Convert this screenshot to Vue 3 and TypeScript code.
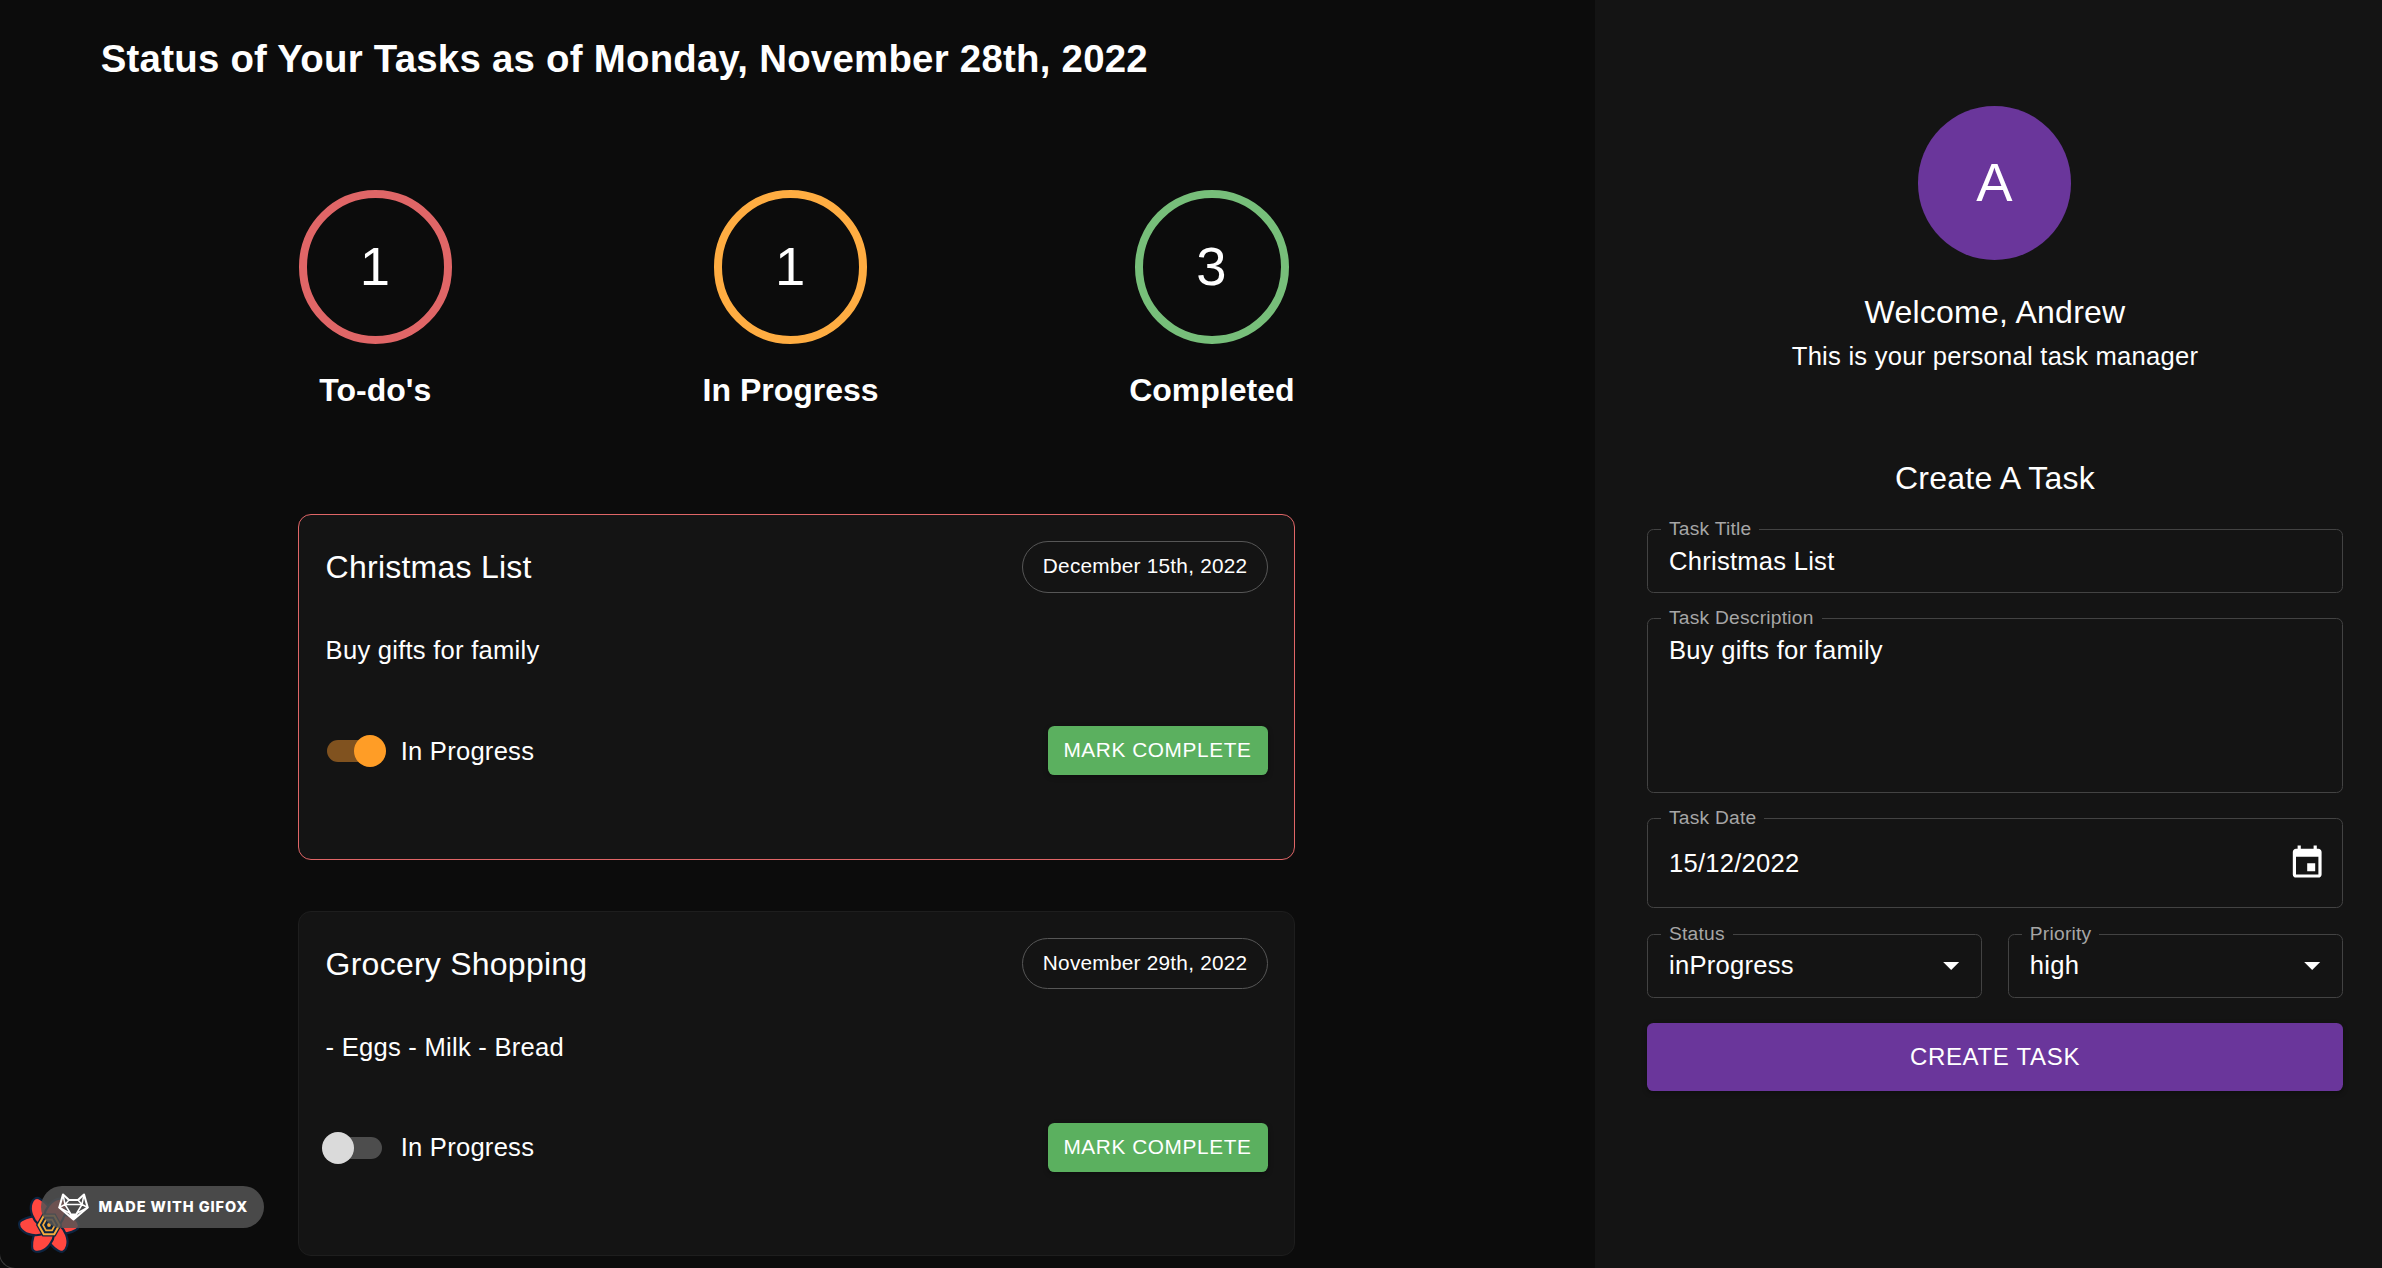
<script setup lang="ts">
interface Stat {
  label: string
  count: number
  color: string
}

interface Task {
  title: string
  date: string
  description: string
  inProgress: boolean
  priority: 'high' | 'normal'
}

const stats: Stat[] = [
  { label: "To-do's", count: 1, color: '#e06667' },
  { label: 'In Progress', count: 1, color: '#ffad42' },
  { label: 'Completed', count: 3, color: '#77bf7a' },
]

const tasks: Task[] = [
  {
    title: 'Christmas List',
    date: 'December 15th, 2022',
    description: 'Buy gifts for family',
    inProgress: true,
    priority: 'high',
  },
  {
    title: 'Grocery Shopping',
    date: 'November 29th, 2022',
    description: '- Eggs - Milk - Bread',
    inProgress: false,
    priority: 'normal',
  },
]

const petals = [2, 62, 120, 182, 243, 302]
</script>

<template>
  <div class="page">
    <main class="board">
      <h1 class="heading">Status of Your Tasks as of Monday, November 28th, 2022</h1>

      <section class="stats">
        <div v-for="s in stats" :key="s.label" class="stat">
          <div class="ring" :style="{ borderColor: s.color }">{{ s.count }}</div>
          <div class="stat-label">{{ s.label }}</div>
        </div>
      </section>

      <section class="tasks">
        <article v-for="t in tasks" :key="t.title" class="card" :class="t.priority">
          <header class="card-head">
            <h2 class="card-title">{{ t.title }}</h2>
            <span class="chip">{{ t.date }}</span>
          </header>
          <p class="card-text">{{ t.description }}</p>
          <footer class="card-foot">
            <span class="switch" :class="{ on: t.inProgress }"><span class="thumb"></span></span>
            <span class="switch-label">In Progress</span>
            <button class="complete" type="button">MARK COMPLETE</button>
          </footer>
        </article>
      </section>
    </main>

    <aside class="sidebar">
      <div class="avatar">A</div>
      <div class="welcome">Welcome, Andrew</div>
      <div class="subtitle">This is your personal task manager</div>

      <h2 class="form-title">Create A Task</h2>
      <form class="form">
        <div class="field">
          <span class="legend">Task Title</span>
          <span class="value">Christmas List</span>
        </div>
        <div class="field tall">
          <span class="legend">Task Description</span>
          <span class="value">Buy gifts for family</span>
        </div>
        <div class="field date">
          <span class="legend">Task Date</span>
          <span class="value">15/12/2022</span>
          <svg class="icon" viewBox="0 0 24 24">
            <path d="M17 12h-5v5h5v-5zM16 1v2H8V1H6v2H5c-1.11 0-1.99.9-1.99 2L3 19c0 1.1.89 2 2 2h14c1.1 0 2-.9 2-2V5c0-1.1-.9-2-2-2h-1V1h-2zm3 18H5V8h14v11z" />
          </svg>
        </div>
        <div class="pair">
          <div class="field select">
            <span class="legend">Status</span>
            <span class="value">inProgress</span>
            <svg class="icon" viewBox="0 0 24 24"><path d="M7 10l5 5 5-5z" /></svg>
          </div>
          <div class="field select">
            <span class="legend">Priority</span>
            <span class="value">high</span>
            <svg class="icon" viewBox="0 0 24 24"><path d="M7 10l5 5 5-5z" /></svg>
          </div>
        </div>
        <button class="create" type="button">CREATE TASK</button>
      </form>
    </aside>

    <svg class="flower" viewBox="-32 -32 64 64">
      <g fill="#ff4740" stroke="#0d2440" stroke-width="2.2" stroke-linejoin="round">
        <path
          v-for="a in petals"
          :key="a"
          :transform="`rotate(${a})`"
          d="M5 -9C12 -12 22 -11 27 -6C31 -2 31 2 27 4C21 8 13 9 5 9Z"
        />
      </g>
      <path d="M-6.500 -11.500H6.500L13 0L6.500 11.500H-6.500L-13 0Z" fill="#0d2440" />
      <path d="M-5.200 -9.300H5.200L10.400 0L5.200 9.300H-5.200L-10.400 0Z" fill="none" stroke="#f5ab3c" stroke-width="2" />
      <path d="M-3 -5.300H3L6 0L3 5.300H-3L-6 0Z" fill="none" stroke="#f5ab3c" stroke-width="1.7" />
      <circle r="1.900" fill="#f5ab3c" />
    </svg>

    <div class="gifox">
      <svg class="fox" viewBox="0 0 31 28">
        <g fill="none" stroke="#fff" stroke-linejoin="round">
          <path d="M5 1.500L11 7H20L26 1.500L29.700 14.500L15.500 26.500L1.300 14.500Z" stroke-width="2.1" />
          <path d="M11 7L7 11.500H24L20 7M7 11.500L12.500 20.500L1.300 14.500L7 11.500M24 11.500L18.500 20.500L29.700 14.500L24 11.500M5 1.500L7 11.500M26 1.500L24 11.500" stroke-width="1.5" />
        </g>
        <path d="M11 20.500H20L17.500 26H13.500Z" fill="#fff" />
      </svg>
      <span class="gifox-text">MADE WITH GIFOX</span>
    </div>
    <div class="corner"></div>
  </div>
</template>

<style>
html,
body {
  margin: 0;
  background: #0c0c0c;
}
</style>

<style scoped>
.page {
  position: relative;
  display: flex;
  width: 2382px;
  height: 1268px;
  overflow: hidden;
  background: #0c0c0c;
  color: #fff;
  font-family: "Liberation Sans", Arial, Helvetica, sans-serif;
  font-size: 25.6px;
  letter-spacing: 0.00938em;
}

.page *,
.page *::before {
  box-sizing: border-box;
}

.board {
  width: 1595px;
  flex: none;
}

.heading {
  margin: 33px 0 0 100.700px;
  font-size: 38.4px;
  line-height: 52px;
  font-weight: 700;
  letter-spacing: 0.245px;
}

.stats {
  display: flex;
  justify-content: space-between;
  width: 996px;
  margin: 105px 0 0 298.500px;
}

.stat {
  display: flex;
  flex-direction: column;
  align-items: center;
}

.ring {
  display: flex;
  align-items: center;
  justify-content: center;
  width: 153.6px;
  height: 153.6px;
  padding-right: 1px;
  border: 8px solid;
  border-radius: 50%;
  font-size: 54.4px;
  line-height: 60px;
  letter-spacing: 0;
}

.stat-label {
  margin-top: 21.400px;
  font-size: 32px;
  line-height: 51px;
  font-weight: 700;
  letter-spacing: 0;
}

.tasks {
  display: flex;
  flex-direction: column;
  gap: 51px;
  width: 997px;
  margin: 98px 0 0 298px;
}

.card {
  height: 346px;
  padding: 26px 25.600px;
  border: 1px solid #1e1e1e;
  border-radius: 13px;
  background: #141414;
}

.card.high {
  border-color: #e06667;
}

.card.normal {
  height: 345px;
}

.card-head {
  display: flex;
  align-items: center;
  justify-content: space-between;
  height: 52px;
}

.card-title {
  margin: 1px 0 0 1px;
  font-size: 32px;
  line-height: 51px;
  font-weight: 400;
  letter-spacing: 0.0075em;
}

.chip {
  height: 52px;
  padding: 0 20px 0 19.400px;
  border: 1px solid #565656;
  border-radius: 26px;
  font-size: 20.8px;
  line-height: 48px;
}

.normal .chip {
  height: 51px;
  margin-bottom: 1px;
}

.card-text {
  margin: 38.400px 0 0 1px;
  line-height: 38.400px;
}

.card-foot {
  display: flex;
  align-items: center;
  height: 49px;
  margin-top: 55.800px;
}

.switch {
  position: relative;
  width: 54.400px;
  height: 22.400px;
  margin: 1.400px 18.700px 0 3px;
  border-radius: 11.200px;
  background: #4d4d4d;
}

.switch.on {
  width: 55px;
  margin: 1.400px 18.700px 0 2.400px;
  background: #80521f;
}

.switch.on + .switch-label {
  margin-top: 2px;
}

.thumb {
  position: absolute;
  top: -4.800px;
  left: -5.600px;
  width: 32px;
  height: 32px;
  border-radius: 50%;
  background: #dadada;
}

.switch.on .thumb {
  left: 27px;
  background: #ff9d26;
}

button {
  padding: 0;
  border: 0;
  border-radius: 6.400px;
  color: #fff;
  font-family: inherit;
  letter-spacing: 0.02857em;
}

.complete {
  width: 220px;
  height: 49px;
  margin-left: auto;
  padding-right: 2px;
  background: #5bb05f;
  font-size: 20.8px;
  line-height: 48px;
  box-shadow: 0 2px 5px rgba(0, 0, 0, 0.35);
}

.sidebar {
  display: flex;
  flex-direction: column;
  align-items: center;
  width: 787px;
  padding: 106px 39px 0 52px;
  background: #141414;
}

.avatar {
  display: flex;
  align-items: center;
  justify-content: center;
  width: 153.6px;
  height: 153.6px;
  margin-right: 1px;
  border-radius: 50%;
  background: #6a369b;
  font-size: 54.4px;
  letter-spacing: 0;
}

.welcome {
  margin-top: 27.400px;
  font-size: 32px;
  line-height: 51px;
  letter-spacing: 0.0075em;
}

.subtitle {
  margin-top: -1px;
  line-height: 38px;
}

.form-title {
  margin: 78px 0 25px;
  font-size: 32px;
  line-height: 51px;
  font-weight: 400;
  letter-spacing: 0.0075em;
}

.form {
  display: flex;
  flex-direction: column;
  gap: 25px;
  width: 100%;
}

.field {
  position: relative;
  display: flex;
  height: 64px;
  padding: 12px 16px 0 21px;
  border: 1px solid #434343;
  border-radius: 6.400px;
  line-height: 38px;
}

.legend {
  position: absolute;
  top: -13px;
  left: 13px;
  padding: 0 8px;
  background: #141414;
  color: #a6a6a6;
  font-size: 19.2px;
  line-height: 24px;
}

.value {
  flex: 1;
}

.tall {
  height: 175px;
}

.date {
  height: 90px;
  padding-top: 25px;
}

.icon {
  width: 38.4px;
  height: 38.4px;
  fill: #fff;
}

.pair {
  display: flex;
  gap: 25.600px;
  margin-top: 1px;
}

.pair .field {
  flex: 1;
  padding: 11px 10.500px 0 21px;
}

.create {
  height: 68px;
  background: #6a369b;
  font-size: 24px;
  line-height: 68px;
  box-shadow: 0 2px 5px rgba(0, 0, 0, 0.35);
}

.flower {
  position: absolute;
  left: 17px;
  top: 1193px;
  width: 64px;
  height: 64px;
}

.gifox {
  position: absolute;
  left: 41px;
  top: 1186px;
  display: flex;
  align-items: center;
  width: 223px;
  height: 42px;
  padding-left: 16.500px;
  border-radius: 21px;
  background: rgba(84, 84, 84, 0.86);
}

.fox {
  width: 31px;
  height: 28px;
}

.gifox-text {
  margin: 0 0 1px 10px;
  font-family: Inter, sans-serif;
  font-size: 14.500px;
  font-weight: 800;
  letter-spacing: 0.950px;
  white-space: nowrap;
}

.corner {
  position: absolute;
  left: -1px;
  bottom: -1px;
  width: 16px;
  height: 16px;
  border-left: 1px solid #3a3a3a;
  border-bottom: 1px solid #3a3a3a;
  border-bottom-left-radius: 16px;
}
</style>
